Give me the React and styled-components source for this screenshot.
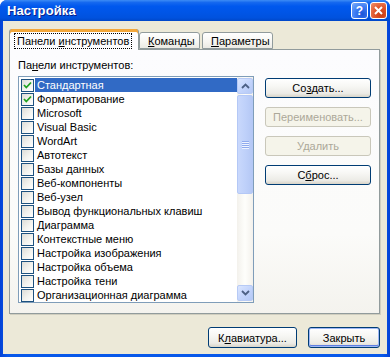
import React from "react";
import styled, { createGlobalStyle } from "styled-components";

const GlobalStyle = createGlobalStyle`
  html, body {
    margin: 0;
    padding: 0;
    background: #ffffff;
  }
  body {
    font-family: "Liberation Sans", Arial, sans-serif;
    font-size: 11px;
    color: #000;
  }
`;

const toolbars = [
  { name: "Стандартная", on: true, selected: true },
  { name: "Форматирование", on: true },
  { name: "Microsoft" },
  { name: "Visual Basic" },
  { name: "WordArt" },
  { name: "Автотекст" },
  { name: "Базы данных" },
  { name: "Веб-компоненты" },
  { name: "Веб-узел" },
  { name: "Вывод функциональных клавиш" },
  { name: "Диаграмма" },
  { name: "Контекстные меню" },
  { name: "Настройка изображения" },
  { name: "Настройка объема" },
  { name: "Настройка тени" },
  { name: "Организационная диаграмма" },
];

const Window = styled.div`
  width: 390px;
  height: 357px;
  box-sizing: border-box;
  display: flex;
  flex-direction: column;
  padding: 0 3px 3px;
  background: linear-gradient(90deg, #0442d6 0%, #0758ea 2%, #0758ea 98%, #0442d6 100%);
  border-radius: 7px 7px 0 0;
  overflow: hidden;
`;

const TitleBar = styled.div`
  height: 21px;
  flex: none;
  display: flex;
  align-items: center;
  margin: 0 -3px;
  padding: 0 3px 0 7px;
  background: linear-gradient(
    180deg,
    #3d8cf5 0%,
    #1568ef 12%,
    #0058ee 30%,
    #0055e6 60%,
    #0052de 85%,
    #0047c8 100%
  );
`;

const Title = styled.div`
  flex: 1;
  color: #fff;
  font-weight: bold;
  font-size: 13px;
  letter-spacing: 0.1px;
  text-shadow: 1px 1px 0 #0a1e8a;
`;

const CaptionButton = styled.div`
  width: 15px;
  height: 15px;
  margin-left: 2px;
  border: 1px solid #fff;
  border-radius: 3px;
  display: flex;
  align-items: center;
  justify-content: center;
  color: #fff;
  font-weight: bold;
  font-size: 12px;
  background: ${(p) =>
    p.$close
      ? "radial-gradient(circle at 70% 75%, #c83c14 0%, #e0542a 45%, #f0906c 100%)"
      : "radial-gradient(circle at 70% 75%, #1b54d8 0%, #3d7df4 50%, #80aff8 100%)"};
`;

const Body = styled.div`
  flex: 1;
  background: #ece9d8;
  display: flex;
  flex-direction: column;
  padding: 8px 7px 6px 6px;
`;

const TabStrip = styled.div`
  display: flex;
  align-items: flex-end;
  height: 20px;
  position: relative;
  z-index: 1;
`;

const Tab = styled.div`
  box-sizing: border-box;
  width: ${(p) => p.$w}px;
  margin-right: ${(p) => p.$gap || 0}px;
  height: ${(p) => (p.$active ? 21 : 17)}px;
  margin-bottom: ${(p) => (p.$active ? -1 : 0)}px;
  border: 1px solid #919b9c;
  border-bottom: ${(p) => (p.$active ? "none" : "1px solid #919b9c")};
  border-top: ${(p) => (p.$active ? "none" : "1px solid #919b9c")};
  border-radius: 3px 3px 0 0;
  background: ${(p) =>
    p.$active
      ? "#fcfcfe"
      : "linear-gradient(180deg, #ffffff 0%, #f6f5f1 60%, #ebeae4 100%)"};
  box-shadow: ${(p) => (p.$active ? "inset 0 3px 0 #f3a73a, inset 0 2px 0 #e68b2c" : "none")};
  display: flex;
  align-items: center;
  padding: ${(p) => (p.$active ? "3px 0 0 5px" : "0 0 0 8px")};
  white-space: nowrap;
`;

const Focus = styled.span`
  outline: 1px dotted #000;
  padding: 1px 2px;
`;

const Panel = styled.div`
  height: 265px;
  box-sizing: border-box;
  border: 1px solid #919b9c;
  background: linear-gradient(180deg, #fcfcfe 0%, #fbfbf9 70%, #f4f3ee 100%);
  box-shadow: 1px 1px 0 #d0cebf;
  display: flex;
  padding: 9px 8px 10px 8px;
  gap: 11px;
`;

const LeftCol = styled.div`
  display: flex;
  flex-direction: column;
`;

const Label = styled.div`
  height: 17px;
  line-height: 13px;
`;

const ListBox = styled.div`
  width: 236px;
  height: 227px;
  box-sizing: border-box;
  border: 1px solid #7f9db9;
  background: #fff;
  display: flex;
`;

const Items = styled.div`
  flex: 1;
  padding: 1px 0 0 2px;
  display: flex;
  flex-direction: column;
`;

const Row = styled.div`
  height: 14px;
  display: flex;
  align-items: center;
`;

const Box = styled.div`
  width: 11px;
  height: 11px;
  flex: none;
  border: 1px solid #1c5180;
  background: linear-gradient(135deg, #dcdcd7 0%, #f3f3ef 55%, #ffffff 100%);
  display: flex;
  align-items: center;
  justify-content: center;
`;

const ItemText = styled.span`
  margin-left: 1px;
  padding: 0 2px;
  height: 14px;
  line-height: 14px;
  white-space: nowrap;
  flex: ${(p) => (p.$selected ? 1 : "none")};
  background: ${(p) => (p.$selected ? "#316ac5" : "transparent")};
  color: ${(p) => (p.$selected ? "#fff" : "#000")};
`;

const ScrollBar = styled.div`
  width: 16px;
  flex: none;
  padding: 1px 0;
  display: flex;
  flex-direction: column;
  background: linear-gradient(90deg, #f3f1ec 0%, #fefefb 50%, #f3f1ec 100%);
`;

const ScrollBtn = styled.div`
  width: 16px;
  height: 16px;
  box-sizing: border-box;
  flex: none;
  border: 1px solid #b7caf5;
  border-radius: 2px;
  background: linear-gradient(135deg, #dbe6ff 0%, #c4d5fc 50%, #b5c9f6 100%);
  display: flex;
  align-items: center;
  justify-content: center;
`;

const Track = styled.div`
  flex: 1;
  display: flex;
  flex-direction: column;
`;

const Thumb = styled.div`
  height: 99px;
  margin-top: 1px;
  box-sizing: border-box;
  border: 1px solid #b4c8f6;
  border-radius: 2px;
  background: linear-gradient(90deg, #c9d8fc 0%, #bfd1fa 50%, #b5c8f5 100%);
  display: flex;
  flex-direction: column;
  align-items: center;
  justify-content: center;
  gap: 1px;
`;

const Grip = styled.div`
  width: 7px;
  height: 1px;
  background: #8faaee;
  box-shadow: 0 1px 0 #eef3ff;
`;

const RightCol = styled.div`
  display: flex;
  flex-direction: column;
  padding-top: 19px;
  gap: 9px;
`;

const Button = styled.div`
  box-sizing: border-box;
  width: ${(p) => p.$w}px;
  height: 20px;
  border: 1px solid ${(p) => (p.$disabled ? "#c9c7ba" : "#003c74")};
  border-radius: 3px;
  background: ${(p) =>
    p.$disabled
      ? "#f5f4ea"
      : "linear-gradient(180deg, #ffffff 0%, #f7f7f4 40%, #ecebe6 80%, #d8d4c8 100%)"};
  color: ${(p) => (p.$disabled ? "#aca899" : "#000")};
  box-shadow: ${(p) =>
    p.$default ? "inset 0 0 0 1px #9eb7f5, inset 0 -1px 0 1px #5f7fe2" : "none"};
  display: flex;
  align-items: center;
  justify-content: center;
  white-space: nowrap;
`;

const Footer = styled.div`
  margin-top: auto;
  display: flex;
  justify-content: flex-end;
  gap: 11px;
  & > div {
    height: 21px;
  }
`;

const Check = () => (
  <svg width="9" height="9" viewBox="0 0 9 9">
    <path d="M1 4 L3.3 6.5 L8 1.5" fill="none" stroke="#21a121" strokeWidth="1.8" />
  </svg>
);

const Chevron = ({ down }) => (
  <svg width="9" height="6" viewBox="0 0 9 6">
    <path
      d={down ? "M1 1 L4.5 4.5 L8 1" : "M1 5 L4.5 1.5 L8 5"}
      fill="none"
      stroke="#4d6185"
      strokeWidth="1.8"
    />
  </svg>
);

export default function App() {
  return (
    <>
      <GlobalStyle />
      <Window>
        <TitleBar>
          <Title>Настройка</Title>
          <CaptionButton>?</CaptionButton>
          <CaptionButton $close>
            <svg width="9" height="9" viewBox="0 0 9 9">
              <path d="M1 1 L8 8 M8 1 L1 8" stroke="#fff" strokeWidth="2" />
            </svg>
          </CaptionButton>
        </TitleBar>
        <Body>
          <TabStrip>
            <Tab $active $w={130}>
              <Focus>
                Панели <u>и</u>нструментов
              </Focus>
            </Tab>
            <Tab $w={61} $gap={2}>
              <span>
                <u>К</u>оманды
              </span>
            </Tab>
            <Tab $w={71}>
              <span>
                <u>П</u>араметры
              </span>
            </Tab>
          </TabStrip>
          <Panel>
            <LeftCol>
              <Label>
                Па<u>н</u>ели инструментов:
              </Label>
              <ListBox>
                <Items>
                  {toolbars.map((t) => (
                    <Row key={t.name}>
                      <Box>{t.on && <Check />}</Box>
                      <ItemText $selected={t.selected}>{t.name}</ItemText>
                    </Row>
                  ))}
                </Items>
                <ScrollBar>
                  <ScrollBtn>
                    <Chevron />
                  </ScrollBtn>
                  <Track>
                    <Thumb>
                      <Grip />
                      <Grip />
                      <Grip />
                      <Grip />
                    </Thumb>
                  </Track>
                  <ScrollBtn>
                    <Chevron down />
                  </ScrollBtn>
                </ScrollBar>
              </ListBox>
            </LeftCol>
            <RightCol>
              <Button $w={106}>
                Со<u>з</u>дать...
              </Button>
              <Button $w={106} $disabled>
                Переименовать...
              </Button>
              <Button $w={106} $disabled>
                Удалить
              </Button>
              <Button $w={106}>
                С<u>б</u>рос...
              </Button>
            </RightCol>
          </Panel>
          <Footer>
            <Button $w={89}>
              К<u>л</u>авиатура...
            </Button>
            <Button $w={72} $default>
              Закрыть
            </Button>
          </Footer>
        </Body>
      </Window>
    </>
  );
}
